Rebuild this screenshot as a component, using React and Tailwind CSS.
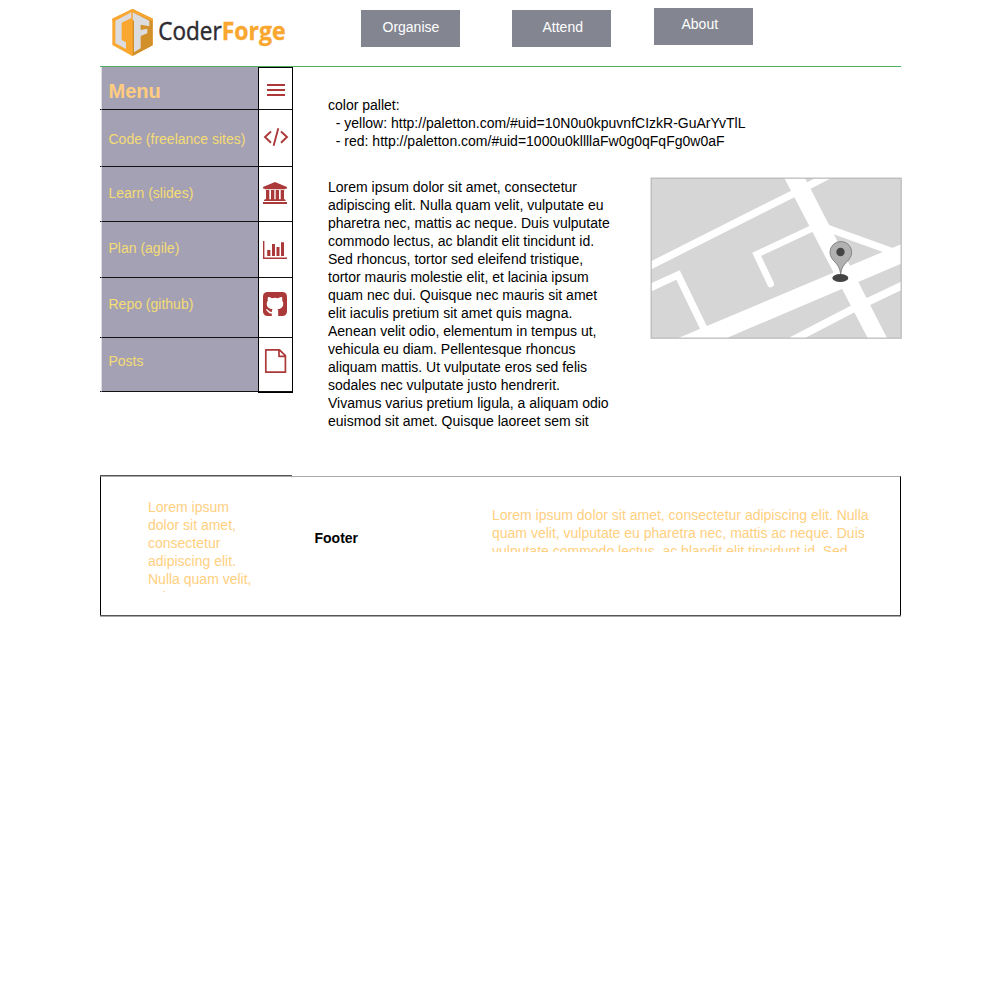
import React from "react";

const RED = "#ab3939";

function Logo() {
  return (
    <svg className="ml-[10px] mt-2 h-[50px] w-[180px] shrink-0" viewBox="45 24 540 150">
      <path d="M112 27L173 56V136L112 168L52 135V56Z" fill="#f9a72f" />
      <path d="M113 27L173 56V136L113 168Z" fill="#d1902a" />
      <path d="M112 27L173 56V64L112 36L52 64V56Z" fill="#f9a72f" />
      <path d="M109 37V54L80 68V120L93 127V147L61 130V62Z" fill="#dcdcdf" />
      <path d="M113 37L163 62V79L137 74V90L157 86V100L137 108V145L117 157V62L113 60Z" fill="#dcdcdf" />
      <text x="190" y="120" fontSize="75" fill="#2d2b30" stroke="#2d2b30" strokeWidth="1.4" textLength="190" lengthAdjust="spacingAndGlyphs" fontFamily="'Open Sans', sans-serif">Coder</text>
      <text x="380" y="120" fontSize="75" fontWeight="700" fill="#f9a72f" stroke="#f9a72f" strokeWidth="1" textLength="192" lengthAdjust="spacingAndGlyphs" fontFamily="'Open Sans', sans-serif">Forge</text>
    </svg>
  );
}

function BarsIcon() {
  return (
    <svg className="block h-[41px] w-[33px]" viewBox="259 68 33 41" fill={RED}>
      <path d="M267 84h18v2h-18zM267 89h18v2h-18zM267 94h18v2h-18z" />
    </svg>
  );
}

function CodeIcon() {
  return (
    <svg className="block h-14 w-[33px]" viewBox="259 110 33 56" fill="none" stroke={RED} strokeWidth="1.9">
      <path d="M271 131.5L265 137L271 142.7M281 131.5L287 137L281 142.7M278.3 128.3L273.6 145.7" />
    </svg>
  );
}

function BankIcon() {
  return (
    <svg className="block h-[54px] w-[33px]" viewBox="259 167 33 54" fill={RED}>
      <path d="M275 182L287 187V188.5H285.5V189.3H264.5V188.5H263V187Z" />
      <path d="M266 190h3.3v9.3h1.7V190h3.3v9.3h1.4V190h3.3v9.3h1.7V190h3.3v9.3h.8l.8.7v1H264v-1l.9-.7H266z" />
      <path d="M263 202h24v2h-24z" />
    </svg>
  );
}

function ChartIcon() {
  return (
    <svg className="block h-[55px] w-[33px]" viewBox="259 222 33 55" fill={RED}>
      <path d="M263 241h1.4v16.5H287V259H263zM267.2 250h3.2v6h-3.2zM272 244h3v12h-3zM276.5 247h3v9h-3zM281 242.3h3V256H281z" />
    </svg>
  );
}

function GithubIcon() {
  return (
    <svg className="block h-[59px] w-[33px]" viewBox="259 278 33 59">
      <rect x="263" y="292" width="24" height="24" rx="4.5" fill={RED} />
      <path d="M268 297Q270.3 297 271.9 298.2Q275 297.5 278.1 298.2Q279.8 297 282 297Q282.7 298.8 282.1 300.3Q283.3 301.8 283.3 303.8Q283.3 308.7 277.5 309.2Q278.2 310 278.2 311.5V316H271.8V313.4C268.5 314 268.3 311.8 266.3 310.3Q265.6 309.4 266.5 309.3C268.7 309.5 268.7 312 271.8 311.9Q271.9 310 272.6 309.2Q266.7 308.7 266.7 303.8Q266.7 301.8 267.9 300.3Q267.3 298.8 268 297Z" fill="#fff" />
    </svg>
  );
}

function FileIcon() {
  return (
    <svg className="block h-[53px] w-[33px]" viewBox="259 338 33 53" fill="none" stroke={RED} strokeWidth="1.7" strokeLinejoin="round">
      <path d="M265.8 349.8H279.5L285.4 355.7V372.2H265.8ZM279 350V356.3H285.3" />
    </svg>
  );
}

function MapImage() {
  return (
    <svg className="mt-[81px] ml-[40px] h-[162px] w-[252px] shrink-0" viewBox="15 15 756 486">
      <rect x="18" y="18" width="750" height="480" fill="#d6d6d6" />
      <g fill="#fff">
        <path d="M418 18H480L726 498H668Z" />
        <path d="M100 498L565 302L768 217V275L245 498Z" />
      </g>
      <g fill="none" stroke="#fff">
        <path d="M10 284L445 65L560 5" strokeWidth="22" />
        <path d="M440 506L625 410L780 336" strokeWidth="23" />
        <path d="M10 350L99 309L178 472" strokeWidth="22" />
        <path d="M505 167L335 247L377 336" strokeWidth="20" strokeLinecap="round" />
        <path d="M540 166L740 238" strokeWidth="21" />
      </g>
      <rect x="18.5" y="18.5" width="750" height="480" fill="none" stroke="#b8b8b8" strokeWidth="3.6" />
      <ellipse cx="586" cy="318" rx="24" ry="12" fill="#444" />
      <path d="M587 306C584 270 555 268 555 241A32.5 32.5 0 0 1 620 241C620 268 590 270 587 306Z" fill="#b1b1b1" stroke="#858585" strokeWidth="3" />
      <circle cx="586.5" cy="240" r="12.5" fill="#444" />
    </svg>
  );
}

const lorem = [
  "Lorem ipsum dolor sit amet, consectetur",
  "adipiscing elit. Nulla quam velit, vulputate eu",
  "pharetra nec, mattis ac neque. Duis vulputate",
  "commodo lectus, ac blandit elit tincidunt id.",
  "Sed rhoncus, tortor sed eleifend tristique,",
  "tortor mauris molestie elit, et lacinia ipsum",
  "quam nec dui. Quisque nec mauris sit amet",
  "elit iaculis pretium sit amet quis magna.",
  "Aenean velit odio, elementum in tempus ut,",
  "vehicula eu diam. Pellentesque rhoncus",
  "aliquam mattis. Ut vulputate eros sed felis",
  "sodales nec vulputate justo hendrerit.",
  "Vivamus varius pretium ligula, a aliquam odio",
  "euismod sit amet. Quisque laoreet sem sit",
];

function Row({ size, pad, icon, children }) {
  return (
    <div className={`flex ${size}`}>
      <div className="w-px border-b border-[#111]" />
      <div className={`w-[157px] border-b border-l border-b-[#111] border-l-[#dddde3] bg-[#a4a1b5] pl-[6.5px] whitespace-nowrap text-[#f5dc74] ${pad}`}>
        {children}
      </div>
      <div className="w-[35px] border-x border-b border-x-black border-b-[#111]">{icon}</div>
    </div>
  );
}

export default function App() {
  return (
    <div className="min-h-screen w-full bg-white font-['Liberation_Sans',Arial,sans-serif] text-[14px] leading-[18px] text-black">
      <div className="ml-[100px] w-[801px]">
        <header className="flex h-[67px] items-start border-b border-[#4fae62]">
          <Logo />
          <nav className="flex items-start text-white">
            <a className="mt-[10px] ml-[71px] block h-[37px] w-[99px] bg-[#838691] pt-2 pl-[21.5px]">Organise</a>
            <a className="mt-[10px] ml-[52px] block h-[37px] w-[99px] bg-[#838691] pt-2 pl-[30.5px]">Attend</a>
            <a className="mt-2 ml-[43px] block h-[37px] w-[99px] bg-[#838691] pt-[7px] pl-[27.5px]">About</a>
          </nav>
        </header>

        <div className="flex h-[408px] items-start">
          <aside className="w-[193px] shrink-0">
            <Row size="h-[43px]" pad="pt-3" icon={<div className="border-t border-black"><BarsIcon /></div>}>
              <h2 className="text-[20px] leading-6 font-bold text-[#ffcc80]">Menu</h2>
            </Row>
            <Row size="h-[57px]" pad="pt-5" icon={<CodeIcon />}>Code (freelance sites)</Row>
            <Row size="h-[55px]" pad="pt-[17px]" icon={<BankIcon />}>Learn (slides)</Row>
            <Row size="h-[56px]" pad="pt-[17px]" icon={<ChartIcon />}>Plan (agile)</Row>
            <Row size="h-[60px]" pad="pt-[17px]" icon={<GithubIcon />}>Repo (github)</Row>
            <Row size="h-[54px]" pad="pt-[14px]" icon={<FileIcon />}>Posts</Row>
            <div className="ml-[158px] h-px bg-black" />
          </aside>

          <main className="ml-[35px] pt-[29px]">
            <div className="h-[82px] whitespace-pre">
              <p>color pallet:</p>
              <p>{"  - yellow: http://paletton.com/#uid=10N0u0kpuvnfCIzkR-GuArYvTlL"}</p>
              <p>{"  - red: http://paletton.com/#uid=1000u0kllllaFw0g0qFqFg0w0aF"}</p>
            </div>
            <div className="flex">
              <div className="w-[282px] whitespace-nowrap">
                {lorem.map((line) => (
                  <p key={line}>{line}</p>
                ))}
              </div>
              <div className="-mt-[82px] shrink-0">
                <MapImage />
              </div>
            </div>
          </main>
        </div>

        <div className="h-px w-[192px] bg-[#555]" />
        <footer className="flex h-[139px] items-start border-x border-t border-x-black border-t-[#aaa] whitespace-nowrap text-[#ffd080]">
          <div className="mt-[21px] ml-[47px] h-[94px] w-[110px] overflow-hidden">
            <p>Lorem ipsum</p>
            <p>dolor sit amet,</p>
            <p>consectetur</p>
            <p>adipiscing elit.</p>
            <p>Nulla quam velit,</p>
            <p>vulputate eu</p>
          </div>
          <div className="mt-[52px] ml-[56.5px] w-[120.5px] font-bold text-black">Footer</div>
          <div className="mt-[29px] ml-[57px] h-[46px] w-[385px] overflow-hidden">
            <p>Lorem ipsum dolor sit amet, consectetur adipiscing elit. Nulla</p>
            <p>quam velit, vulputate eu pharetra nec, mattis ac neque. Duis</p>
            <p>vulputate commodo lectus, ac blandit elit tincidunt id. Sed</p>
          </div>
        </footer>
        <div className="h-[2px] border-b border-[#aaa] bg-[#555]" />
      </div>
    </div>
  );
}
